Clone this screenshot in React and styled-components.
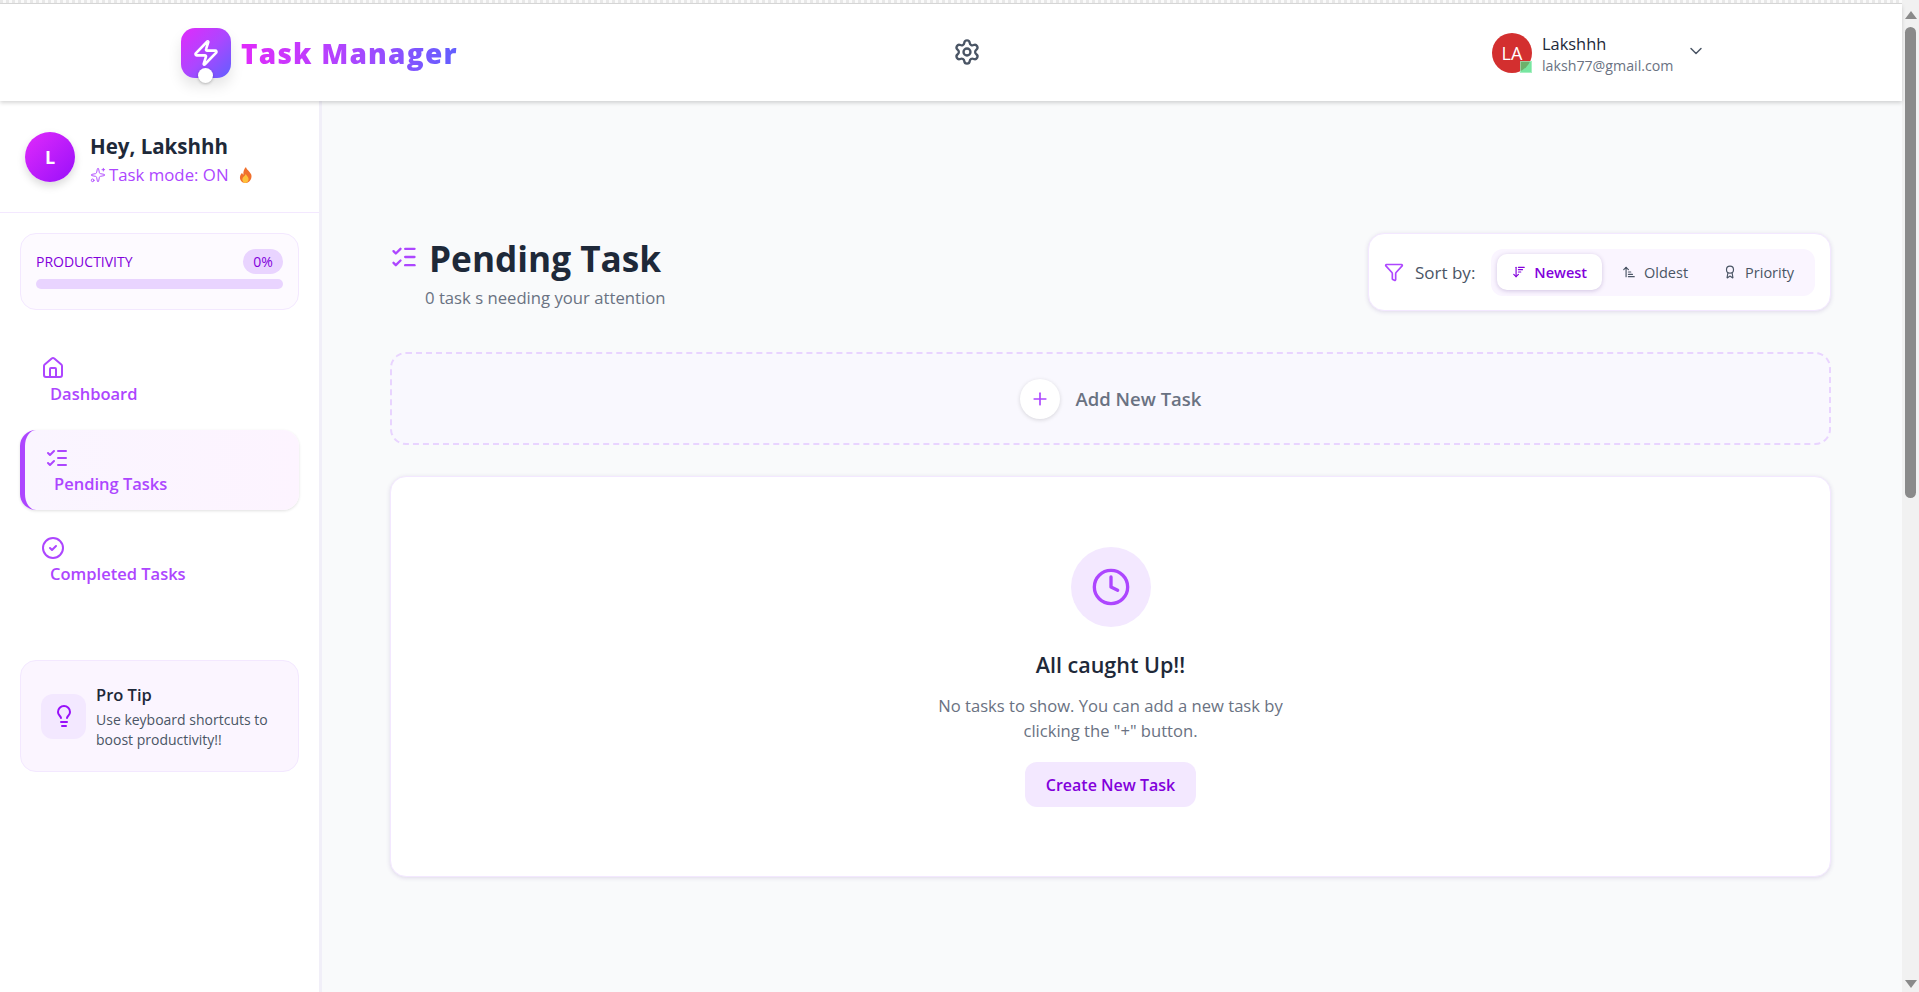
import React from 'react'
import styled, { createGlobalStyle } from 'styled-components'
import {
  Zap, Settings, ChevronDown, Sparkles, House, ListChecks, CircleCheck, Lightbulb,
  Filter, ArrowDownWideNarrow, ArrowUpNarrowWide, Award, Plus, Clock,
} from 'lucide-react'

const GlobalStyle = createGlobalStyle`
  html, body { margin: 0; height: 100%; overflow: hidden; background: #f9fafb; }
  body { font-family: "Open Sans", "Noto Sans", "Liberation Sans", sans-serif; color: #1e2939; }
  * { box-sizing: border-box; }
`

const navItems = [
  { label: 'Dashboard', icon: House },
  { label: 'Pending Tasks', icon: ListChecks, active: true },
  { label: 'Completed Tasks', icon: CircleCheck },
]

const sortItems = [
  { label: 'Newest', icon: ArrowDownWideNarrow, active: true },
  { label: 'Oldest', icon: ArrowUpNarrowWide },
  { label: 'Priority', icon: Award },
]

function Flame() {
  return (
    <FlameIcon viewBox="0 0 16 18" aria-hidden="true">
      <path d="M8.500.5c.6 3 4.200 4.600 5.600 8 1.200 3.200-.9 9-6 9-4.400 0-6.800-4-5.800-7.500.4-1.500 1.300-2.500 2-3.500.3 1.200.8 1.900 1.500 2.300C5.300 5.600 6.500 2.600 8.500.5z" fill="#f0702c" />
      <path d="M8.300 8c.4 1.600 3 2.800 3 5.300 0 2-1.500 4.200-3.400 4.200-2 0-3.400-2.100-3.300-4 .1-2.300 2.900-3.200 3.700-5.500z" fill="#fdc13a" />
    </FlameIcon>
  )
}

export default function App() {
  return (
    <Page>
      <GlobalStyle />
      <Left>
        <TopStrip />
        <Header>
          <Brand>
            <LogoBox>
              <Zap size={28} strokeWidth={2.25} color="#fff" />
              <LogoDot />
            </LogoBox>
            <BrandName>Task Manager</BrandName>
          </Brand>
          <GearWrap>
            <Settings size={28} strokeWidth={2} color="#4a5565" />
          </GearWrap>
          <UserBox>
            <UserAvatar>
              LA
              <StatusDot />
            </UserAvatar>
            <UserText>
              <UserName>Lakshhh</UserName>
              <UserMail>laksh77@gmail.com</UserMail>
            </UserText>
            <UserChevron>
              <ChevronDown size={20} strokeWidth={1.75} color="#4a5565" />
            </UserChevron>
          </UserBox>
        </Header>

        <Body>
          <Sidebar>
            <Greeting>
              <GreetAvatar>L</GreetAvatar>
              <GreetText>
                <GreetName>Hey, Lakshhh</GreetName>
                <GreetMode>
                  <Sparkles size={16} strokeWidth={1.4} />
                  <span>Task mode: ON</span>
                  <Flame />
                </GreetMode>
              </GreetText>
            </Greeting>

            <ProductivityCard>
              <ProdHead>
                <ProdLabel>PRODUCTIVITY</ProdLabel>
                <ProdBadge>0%</ProdBadge>
              </ProdHead>
              <ProdTrack />
            </ProductivityCard>

            <Nav>
              {navItems.map((item) => (
                <NavItem key={item.label} $active={item.active}>
                  <item.icon size={24} strokeWidth={2} color="#ad46ff" />
                  <NavLabel>{item.label}</NavLabel>
                </NavItem>
              ))}
            </Nav>

            <TipCard>
              <TipIcon>
                <Lightbulb size={24} strokeWidth={2} color="#9810fa" />
              </TipIcon>
              <div>
                <TipTitle>Pro Tip</TipTitle>
                <TipText>Use keyboard shortcuts to boost productivity!!</TipText>
              </div>
            </TipCard>
          </Sidebar>

          <Main>
            <TitleRow>
              <div>
                <TitleLine>
                  <ListChecks size={28} strokeWidth={2} color="#ad46ff" />
                  <Title>Pending Task</Title>
                </TitleLine>
                <Subtitle>0 task s needing your attention</Subtitle>
              </div>
              <SortCard>
                <Filter size={20} strokeWidth={2} color="#ad46ff" />
                <SortLabel>Sort by:</SortLabel>
                <SortGroup>
                  {sortItems.map((item) => (
                    <SortButton key={item.label} $active={item.active}>
                      <item.icon size={14} strokeWidth={2} />
                      {item.label}
                    </SortButton>
                  ))}
                </SortGroup>
              </SortCard>
            </TitleRow>

            <AddTask>
              <AddCircle>
                <Plus size={20} strokeWidth={2} color="#ad46ff" />
              </AddCircle>
              <AddLabel>Add New Task</AddLabel>
            </AddTask>

            <EmptyCard>
              <ClockCircle>
                <Clock size={40} strokeWidth={2} color="#ad46ff" />
              </ClockCircle>
              <EmptyTitle>All caught Up!!</EmptyTitle>
              <EmptyText>No tasks to show. You can add a new task by clicking the "+" button.</EmptyText>
              <CreateButton>Create New Task</CreateButton>
            </EmptyCard>
          </Main>
        </Body>
      </Left>

      <ScrollBar>
        <ArrowUp />
        <ScrollTrack>
          <ScrollThumb />
        </ScrollTrack>
        <ArrowDown />
      </ScrollBar>
    </Page>
  )
}

const Page = styled.div`
  display: flex;
  height: 100vh;
  overflow: hidden;
`
const Left = styled.div`
  flex: 1;
  min-width: 0;
  display: flex;
  flex-direction: column;
`
const TopStrip = styled.div`
  height: 4px;
  flex: none;
  background: repeating-linear-gradient(90deg, #e8e8e8 0 3px, #fafafa 3px 6px);
  border-bottom: 1px solid #d9d9d9;
`
const Header = styled.header`
  position: relative;
  z-index: 2;
  flex: none;
  height: 97px;
  display: flex;
  align-items: center;
  padding-left: 181px;
  background: #fff;
  box-shadow: 0 2px 4px rgba(0, 0, 0, 0.16);
`
const Brand = styled.div`
  display: flex;
  align-items: center;
  gap: 10px;
  width: 772px;
`
const LogoBox = styled.div`
  position: relative;
  width: 50px;
  height: 50px;
  display: flex;
  align-items: center;
  justify-content: center;
  border-radius: 14px;
  background: linear-gradient(135deg, #e12afb, #ad46ff 50%, #615fff);
  box-shadow: 0 8px 14px rgba(0, 0, 0, 0.1);
`
const LogoDot = styled.span`
  position: absolute;
  left: 17px;
  bottom: -5px;
  width: 15px;
  height: 15px;
  border-radius: 50%;
  background: #fff;
  box-shadow: 0 1px 3px rgba(0, 0, 0, 0.25);
`
const BrandName = styled.span`
  font-size: 28px;
  font-weight: 800;
  letter-spacing: 1.2px;
  line-height: 36px;
  background: linear-gradient(90deg, #e12afb, #ad46ff 50%, #615fff);
  -webkit-background-clip: text;
  background-clip: text;
  color: transparent;
`
const GearWrap = styled.div`
  display: flex;
  width: 539px;
  margin-top: -1px;
`
const UserBox = styled.div`
  display: flex;
  align-items: center;
`
const UserAvatar = styled.div`
  position: relative;
  width: 40px;
  height: 40px;
  display: flex;
  align-items: center;
  justify-content: center;
  border-radius: 50%;
  background: #d32f2f;
  color: #fff;
  font-size: 18px;
`
const StatusDot = styled.span`
  position: absolute;
  right: 0;
  bottom: 0;
  width: 12px;
  height: 12px;
  background: rgba(74, 222, 128, 0.75);
  border: 1px solid rgba(255, 255, 255, 0.35);
`
const UserText = styled.div`
  margin: 3px 0 0 10px;
  width: 144px;
`
const UserName = styled.div`
  font-size: 16.400px;
  font-weight: 500;
  line-height: 23px;
`
const UserMail = styled.div`
  margin-top: 1px;
  font-size: 14.200px;
  line-height: 20px;
  color: #6a7282;
`
const UserChevron = styled.span`
  display: flex;
  margin-top: -3px;
`
const Body = styled.div`
  flex: 1;
  min-height: 0;
  display: flex;
`
const Sidebar = styled.aside`
  flex: none;
  width: 322px;
  background: #fff;
  border-right: 3px solid #f1eff8;
`
const Greeting = styled.div`
  height: 112px;
  display: flex;
  align-items: center;
  gap: 15px;
  padding: 0 25px;
  border-bottom: 1px solid #f3e8ff;
`
const GreetText = styled.div`
  padding-top: 5px;
`
const GreetAvatar = styled.div`
  width: 50px;
  height: 50px;
  display: flex;
  align-items: center;
  justify-content: center;
  border-radius: 50%;
  background: linear-gradient(135deg, #e12afb, #9810fa);
  box-shadow: 0 4px 8px rgba(0, 0, 0, 0.15);
  color: #fff;
  font-size: 18px;
  font-weight: 700;
`
const GreetName = styled.div`
  font-size: 20.500px;
  font-weight: 700;
  line-height: 28px;
`
const GreetMode = styled.div`
  display: flex;
  align-items: center;
  gap: 3px;
  margin-top: 3px;
  font-size: 16.800px;
  font-weight: 500;
  line-height: 24px;
  color: #ad46ff;
`
const FlameIcon = styled.svg`
  flex: none;
  width: 15px;
  height: 18px;
  margin-left: 6px;
`
const ProductivityCard = styled.div`
  margin: 20px 20px 0;
  height: 77px;
  padding: 15px 15px 0;
  border: 1px solid #f3e8ff;
  border-radius: 16px;
  background: #fdfaff;
`
const ProdHead = styled.div`
  display: flex;
  align-items: center;
  justify-content: space-between;
`
const ProdLabel = styled.span`
  font-size: 14px;
  font-weight: 500;
  color: #8200db;
`
const ProdBadge = styled.span`
  width: 40px;
  height: 25px;
  display: flex;
  align-items: center;
  justify-content: center;
  border-radius: 13px;
  background: #e9d4ff;
  color: #8200db;
  font-size: 14px;
`
const ProdTrack = styled.div`
  height: 10px;
  margin-top: 5px;
  border-radius: 5px;
  background: #e9d4ff;
`
const Nav = styled.nav`
  margin: 33px 20px 0;
  display: flex;
  flex-direction: column;
  gap: 13px;
`
const NavItem = styled.a`
  display: block;
  height: ${(p) => (p.$active ? '80px' : '74px')};
  padding: ${(p) => (p.$active ? '16px 0 0 20px' : '13px 0 0 21px')};
  border-radius: 16px;
  ${(p) => p.$active && `
    border-left: 5px solid #ad46ff;
    background: linear-gradient(90deg, #faf5ff, #fdf4ff);
    box-shadow: 0 1px 3px rgba(0, 0, 0, 0.12);
  `}
  svg { display: block; }
`
const NavLabel = styled.div`
  margin: 2px 0 0 9px;
  font-size: 16.500px;
  font-weight: 600;
  line-height: 24px;
  color: #ad46ff;
`
const TipCard = styled.div`
  margin: 63px 20px 0;
  height: 112px;
  display: flex;
  align-items: center;
  gap: 10px;
  padding-left: 20px;
  border: 1px solid #f3e8ff;
  border-radius: 16px;
  background: #fbf5ff;
`
const TipIcon = styled.div`
  flex: none;
  width: 45px;
  height: 45px;
  display: flex;
  align-items: center;
  justify-content: center;
  border-radius: 12px;
  background: #f3e8ff;
`
const TipTitle = styled.div`
  font-size: 16.500px;
  font-weight: 600;
  line-height: 24px;
`
const TipText = styled.div`
  width: 180px;
  margin-top: 3px;
  font-size: 14px;
  line-height: 20px;
  color: #4a5565;
`
const Main = styled.main`
  flex: 1;
  min-width: 0;
  padding: 132px 71px 0 68px;
  background: #f9fafb;
`
const TitleRow = styled.div`
  display: flex;
  justify-content: space-between;
  align-items: flex-start;
`
const TitleLine = styled.div`
  display: flex;
  align-items: flex-start;
  gap: 11px;
  margin-top: 1px;
  svg { margin-top: 9px; }
`
const Title = styled.h1`
  margin: 0;
  font-size: 35.200px;
  font-weight: 700;
  line-height: 48px;
  color: #1e2939;
`
const Subtitle = styled.div`
  margin: 4px 0 0 35px;
  font-size: 16.700px;
  line-height: 24px;
  color: #6a7282;
`
const SortCard = styled.div`
  width: 463px;
  height: 78px;
  display: flex;
  align-items: center;
  padding: 0 15px;
  border: 1px solid #f3e8ff;
  border-radius: 16px;
  background: #fff;
  box-shadow: 0 1px 4px rgba(90, 50, 140, 0.16);
  svg { flex: none; }
`
const SortLabel = styled.span`
  margin-left: 11px;
  font-size: 17px;
  font-weight: 500;
  color: #4a5565;
  white-space: nowrap;
`
const SortGroup = styled.div`
  margin-left: 16px;
  flex: 1;
  height: 47px;
  display: flex;
  align-items: center;
  padding: 0 6px;
  gap: 5px;
  border-radius: 12px;
  background: #faf5ff;
`
const SortButton = styled.button`
  height: 36px;
  display: flex;
  align-items: center;
  gap: 8px;
  padding: 0 15px;
  border: 0;
  border-radius: 10px;
  font-family: inherit;
  font-size: 14.500px;
  font-weight: ${(p) => (p.$active ? 600 : 500)};
  white-space: nowrap;
  color: ${(p) => (p.$active ? '#8200db' : '#4a5565')};
  background: ${(p) => (p.$active ? '#fff' : 'transparent')};
  box-shadow: ${(p) => (p.$active ? '0 1px 4px rgba(90, 50, 140, 0.25)' : 'none')};
`
const AddTask = styled.div`
  margin-top: 41px;
  height: 93px;
  display: flex;
  align-items: center;
  justify-content: center;
  gap: 16px;
  border: 2px dashed #e9d4ff;
  border-radius: 16px;
  background: #f9f8fe;
`
const AddCircle = styled.span`
  width: 40px;
  height: 40px;
  display: flex;
  align-items: center;
  justify-content: center;
  border-radius: 50%;
  background: #fff;
  box-shadow: 0 1px 4px rgba(0, 0, 0, 0.14);
`
const AddLabel = styled.span`
  font-size: 18.500px;
  font-weight: 600;
  color: #6a7282;
`
const EmptyCard = styled.section`
  margin-top: 31px;
  height: 401px;
  display: flex;
  flex-direction: column;
  align-items: center;
  padding-top: 70px;
  border: 1px solid #f3e8ff;
  border-radius: 16px;
  background: #fff;
  box-shadow: 0 1px 4px rgba(90, 50, 140, 0.16);
`
const ClockCircle = styled.div`
  width: 80px;
  height: 80px;
  display: flex;
  align-items: center;
  justify-content: center;
  border-radius: 50%;
  background: #f3e8ff;
`
const EmptyTitle = styled.h2`
  margin: 24px 0 0;
  font-size: 21.500px;
  font-weight: 600;
  line-height: 28px;
  color: #1e2939;
`
const EmptyText = styled.p`
  width: 380px;
  margin: 14px 0 0;
  text-align: center;
  font-size: 16.600px;
  line-height: 25px;
  color: #6a7282;
`
const CreateButton = styled.button`
  margin-top: 19px;
  width: 171px;
  height: 45px;
  border: 0;
  border-radius: 12px;
  background: #f3e8ff;
  color: #8200db;
  font-family: inherit;
  font-size: 16px;
  font-weight: 600;
`
const ScrollBar = styled.div`
  flex: none;
  width: 17px;
  display: flex;
  flex-direction: column;
  align-items: center;
  background: #f1f1f1;
`
const ArrowUp = styled.span`
  margin-top: 11px;
  flex: none;
  border-left: 6px solid transparent;
  border-right: 6px solid transparent;
  border-bottom: 8px solid #8a8a8a;
`
const ArrowDown = styled.span`
  margin-bottom: 4px;
  flex: none;
  border-left: 6px solid transparent;
  border-right: 6px solid transparent;
  border-top: 8px solid #8a8a8a;
`
const ScrollTrack = styled.div`
  flex: 1;
  width: 100%;
  padding: 8px 3px 0 3px;
`
const ScrollThumb = styled.div`
  height: 471px;
  border-radius: 6px;
  background: #8a8a8a;
`
